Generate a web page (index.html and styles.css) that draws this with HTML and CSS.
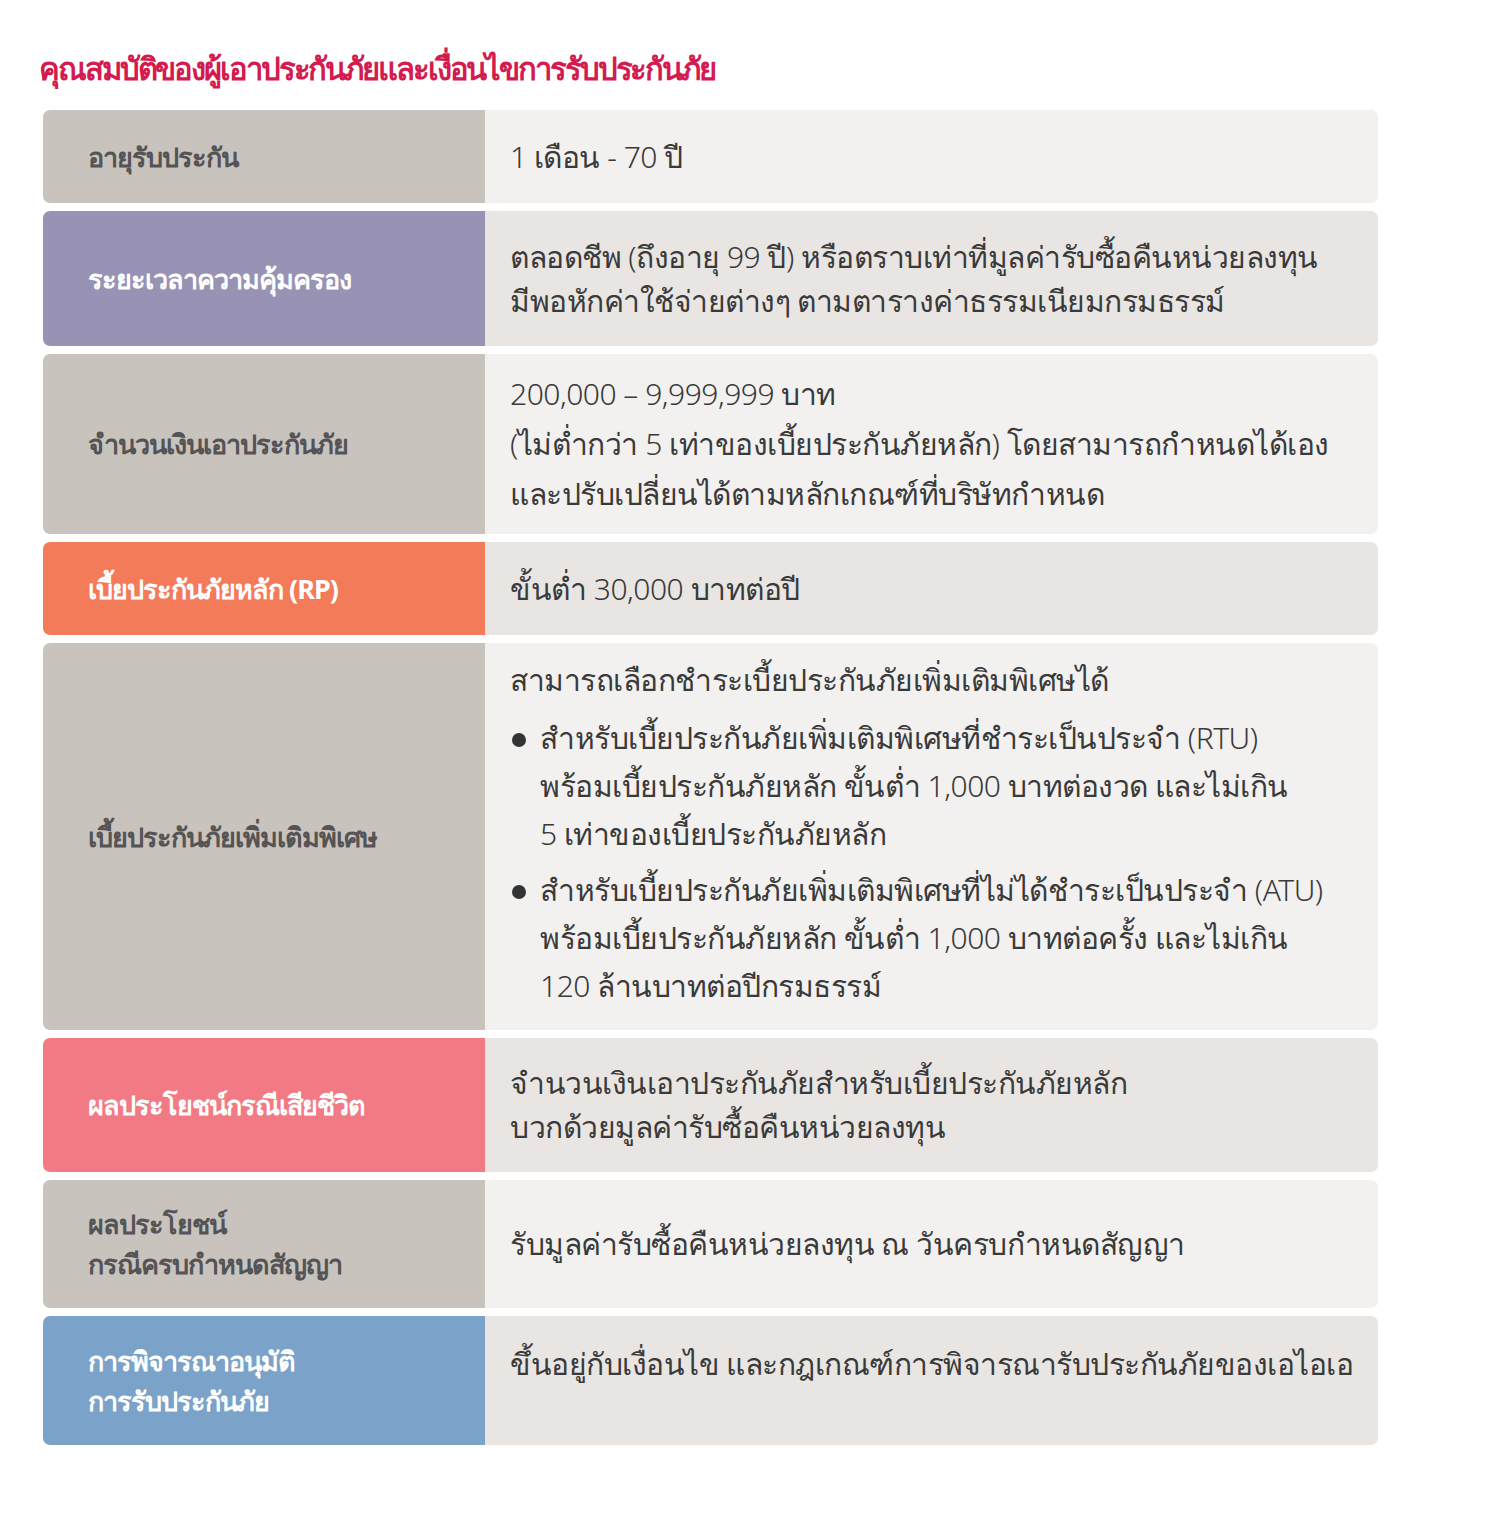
FILE: index.html
```html
<!DOCTYPE html>
<html lang="th">
<head>
<meta charset="utf-8">
<link rel="stylesheet" href="styles.css">
</head>
<body>
<div class="page">
  <h1 class="title">คุณสมบัติของผู้เอาประกันภัยและเงื่อนไขการรับประกันภัย</h1>
  <div class="table">
    <div class="row r1">
      <div class="label gray">อายุรับประกัน</div>
      <div class="value light">1 เดือน - 70 ปี</div>
    </div>
    <div class="row r2">
      <div class="label purple">ระยะเวลาความคุ้มครอง</div>
      <div class="value dark tight">ตลอดชีพ (ถึงอายุ 99 ปี) หรือตราบเท่าที่มูลค่ารับซื้อคืนหน่วยลงทุน<br>มีพอหักค่าใช้จ่ายต่างๆ ตามตารางค่าธรรมเนียมกรมธรรม์</div>
    </div>
    <div class="row r3">
      <div class="label gray">จำนวนเงินเอาประกันภัย</div>
      <div class="value light">200,000 – 9,999,999 บาท<br>(ไม่ต่ำกว่า 5 เท่าของเบี้ยประกันภัยหลัก) โดยสามารถกำหนดได้เอง<br>และปรับเปลี่ยนได้ตามหลักเกณฑ์ที่บริษัทกำหนด</div>
    </div>
    <div class="row r4">
      <div class="label orange">เบี้ยประกันภัยหลัก (RP)</div>
      <div class="value dark">ขั้นต่ำ 30,000 บาทต่อปี</div>
    </div>
    <div class="row r5">
      <div class="label gray">เบี้ยประกันภัยเพิ่มเติมพิเศษ</div>
      <div class="value light list">
        <div class="intro">สามารถเลือกชำระเบี้ยประกันภัยเพิ่มเติมพิเศษได้</div>
        <ul class="bullets">
          <li>สำหรับเบี้ยประกันภัยเพิ่มเติมพิเศษที่ชำระเป็นประจำ (RTU)<br>พร้อมเบี้ยประกันภัยหลัก ขั้นต่ำ 1,000 บาทต่องวด และไม่เกิน<br>5 เท่าของเบี้ยประกันภัยหลัก</li>
          <li>สำหรับเบี้ยประกันภัยเพิ่มเติมพิเศษที่ไม่ได้ชำระเป็นประจำ (ATU)<br>พร้อมเบี้ยประกันภัยหลัก ขั้นต่ำ 1,000 บาทต่อครั้ง และไม่เกิน<br>120 ล้านบาทต่อปีกรมธรรม์</li>
        </ul>
      </div>
    </div>
    <div class="row r6">
      <div class="label pink">ผลประโยชน์กรณีเสียชีวิต</div>
      <div class="value dark tight">จำนวนเงินเอาประกันภัยสำหรับเบี้ยประกันภัยหลัก<br>บวกด้วยมูลค่ารับซื้อคืนหน่วยลงทุน</div>
    </div>
    <div class="row r7">
      <div class="label gray two">ผลประโยชน์<br>กรณีครบกำหนดสัญญา</div>
      <div class="value light">รับมูลค่ารับซื้อคืนหน่วยลงทุน ณ วันครบกำหนดสัญญา</div>
    </div>
    <div class="row r8">
      <div class="label blue two">การพิจารณาอนุมัติ<br>การรับประกันภัย</div>
      <div class="value dark top">ขึ้นอยู่กับเงื่อนไข และกฎเกณฑ์การพิจารณารับประกันภัยของเอไอเอ</div>
    </div>
  </div>
</div>
</body>
</html>
```
FILE: styles.css
```css
html, body {
  margin: 0;
  padding: 0;
  background: #ffffff;
}
body {
  font-family: "Noto Sans", "DejaVu Sans", sans-serif;
}
.page {
  padding: 47px 0 0 43px;
  width: 1335px;
}
.title {
  margin: 0 0 21px -4px;
  font-size: 31px;
  font-weight: 700;
  color: #d41b4f;
  line-height: 42px;
  letter-spacing: -2.1px;
}
.table {
  display: flex;
  flex-direction: column;
  gap: 8px;
}
.row {
  display: flex;
  border-radius: 7px;
  overflow: hidden;
}
.label {
  width: 442px;
  flex: none;
  box-sizing: border-box;
  padding: 0 20px 0 45px;
  display: flex;
  align-items: center;
  font-size: 27px;
  font-weight: 700;
  line-height: 40px;
  letter-spacing: -1px;
}
.label.gray { background: #c9c3bd; color: #545456; }
.label.purple { background: #9893b4; color: #ffffff; }
.label.orange { background: #f47b5a; color: #ffffff; }
.label.pink { background: #f27a85; color: #ffffff; }
.label.blue { background: #7ba2c8; color: #ffffff; }
.value {
  flex: 1;
  box-sizing: border-box;
  padding: 0 20px 0 25px;
  display: flex;
  flex-direction: column;
  justify-content: center;
  font-size: 30px;
  font-weight: 300;
  color: #3a3a3a;
  line-height: 50px;
  letter-spacing: -0.5px;
}
.value.light { background: #f2f1ef; }
.value.dark { background: #e8e5e2; }
.value.tight { line-height: 44px; }
.value.list { padding-bottom: 10px; }
.r1 { height: 93px; }
.r2 { height: 135px; }
.r3 { height: 180px; }
.r4 { height: 93px; }
.r5 { height: 387px; }
.r6 { height: 134px; }
.r7 { height: 128px; }
.r8 { height: 129px; }
.value.top { justify-content: flex-start; padding-top: 23px; }
.intro { line-height: 52px; }
.bullets {
  margin: 0;
  padding: 0;
  list-style: none;
}
.bullets li {
  position: relative;
  padding-left: 30px;
  line-height: 48px;
  margin-top: 8px;
}
.bullets li::before {
  content: "";
  position: absolute;
  left: 2px;
  top: 19px;
  width: 14px;
  height: 14px;
  border-radius: 50%;
  background: #333;
}
```
